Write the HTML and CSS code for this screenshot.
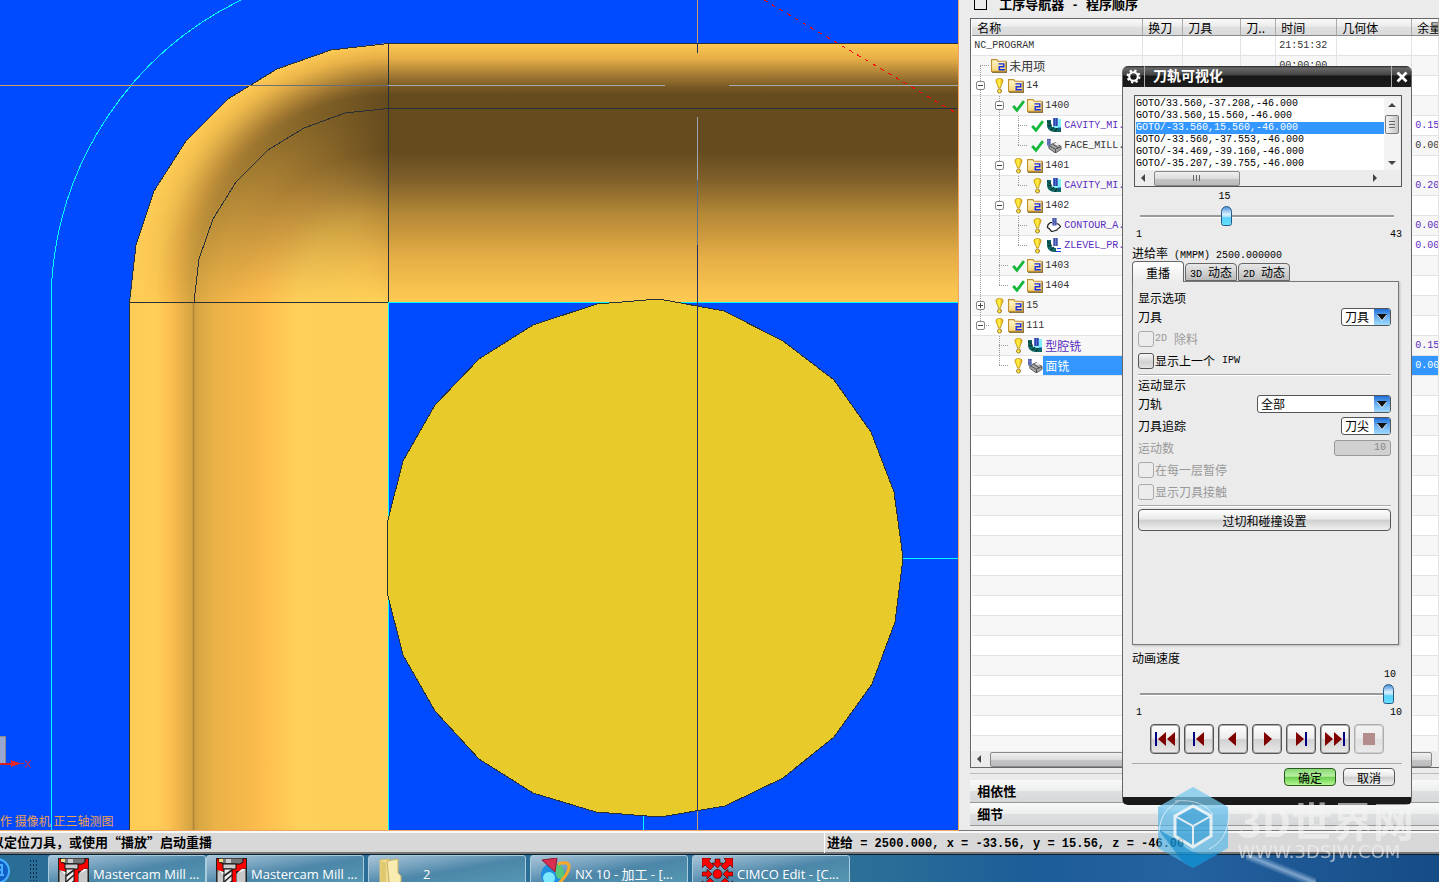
FILE: index.html
```html
<!DOCTYPE html>
<html lang="zh-CN">
<head>
    <meta charset="UTF-8">
    <meta name="viewport" content="width=device-width, initial-scale=1.0">
    <title>刀轨可视化</title>
    <link rel="stylesheet" href="styles.css">
</head>
<body>
    <svg class="sprite" width="0" height="0" aria-hidden="true">
        <defs>
            <linearGradient id="gold" x1="0" x2="1" y1="0" y2="0">
                <stop offset="0" stop-color="#ffd800"/>
                <stop offset=".5" stop-color="#ffee50"/>
                <stop offset="1" stop-color="#e8a800"/>
            </linearGradient>
            <linearGradient id="paper" x1="0" x2="0" y1="0" y2="1">
                <stop offset="0" stop-color="#fff6cc"/>
                <stop offset="1" stop-color="#f8d878"/>
            </linearGradient>
        </defs>
        <symbol id="warn" viewBox="-1 0 12 16">
            <path d="M2.500 2.500C2.500 1 4.500.5 6 .5S9.500 1 9.500 2.500 7.500 7 7 10H5C4.500 7 2.500 5 2.500 2.500z" fill="url(#gold)" stroke="#b88a10" stroke-width=".8"/>
            <circle cx="6" cy="13" r="2" fill="url(#gold)" stroke="#8a6a20" stroke-width=".8"/>
        </symbol>
        <symbol id="check" viewBox="-2 -1 14 14">
            <path d="M1 6 4.500 10 11 1.500" fill="none" stroke="#14b83a" stroke-width="2.600"/>
        </symbol>
        <symbol id="folder" viewBox="0 0 15 14">
            <path d="M.5 12.500V1.500h5l1 1.500h7.500v9.500z" fill="url(#paper)" stroke="#c09030"/>
            <path d="M1 13.500h13.500V3.500" fill="none" stroke="#8a7440"/>
            <path d="M7 5.500h5V8.200H7.700V11H13" fill="none" stroke="#1a2ae0" stroke-width="1.300"/>
        </symbol>
        <symbol id="cavity" viewBox="0 0 16 15">
            <path d="M7 1h8v13H7z" fill="#7ff0f8"/>
            <path d="M1 2h4v4c0 3 3 4 6 4h4v4H9C4 14 1 11 1 7z" fill="#0e6460"/>
            <path d="M1 3l4 3M2 8l4-1M5 12l3-3M9 14l2-4" stroke="#062c2c"/>
            <path d="M7 0h5v8H7z" fill="#4c6cd0"/>
            <path d="M8.500 0v8M10.500 0v8" stroke="#222c88" stroke-width=".6"/>
            <path d="M12 10h3" stroke="#1840e0"/>
        </symbol>
        <symbol id="zlevel" viewBox="0 0 16 15">
            <path d="M1 2h4v4c0 3 3 4 5 4v4H8C4 14 1 11 1 7z" fill="#0e6460"/>
            <path d="M1 3l4 3M2 8l4-1M5 12l3-3" stroke="#062c2c"/>
            <path d="M7 0h5v8H7z" fill="#6c80c8"/>
            <path d="M8.500 0v8M10.500 0v8" stroke="#2c3488" stroke-width=".6"/>
            <path d="M11 10.500h4M10 13.500h5" stroke="#1840e0"/>
        </symbol>
        <symbol id="face" viewBox="0 0 17 16">
            <path d="M3 8l7-3 6 4v3l-6 4-7-5z" fill="#a8a8a8" stroke="#555"/>
            <path d="M3 8l7 4 6-3M10 12v4M7 6.500l6 4" fill="none" stroke="#444"/>
            <path d="M8 6l3-1 3 2-2 1z" fill="#eee"/>
            <path d="M1 1h4v7H1z" fill="#7a88c8"/>
            <path d="M2 1v7M4 1v7" stroke="#333c90" stroke-dasharray="2 1"/>
        </symbol>
        <symbol id="contour" viewBox="0 0 16 16">
            <path d="M6 5H4C2 6 1 8 1 10c2 1 3 2 4 4 2 1 4-1 6-1 0-2 3-2 4-4-1-2-3-3-5-4" fill="#fff" stroke="#222" stroke-width="1.300"/>
            <path d="M6 0h5v8H6z" fill="#6c80c8"/>
            <path d="M7.500 0v8M9.500 0v8" stroke="#2c3488" stroke-width=".6"/>
        </symbol>
        <symbol id="mill" viewBox="0 0 31 32">
            <path d="M0 0h31v32H0z" fill="#222"/>
            <path d="M1 1h29v12H1z" fill="#f00"/>
            <path d="M3 0h24v4l-3 2H8L3 4z" fill="#777" stroke="#111"/>
            <path d="M10 1h5v4h-5z" fill="#ccc"/>
            <path d="M3 1h4v3H3z" fill="#f0e080"/>
            <path d="M7 6h13v5H7z" fill="#ccc" stroke="#111"/>
            <path d="M1 12l7 4v16H1zM20 16l6-5h4v21H20z" fill="#c8c8c8" stroke="#222"/>
            <path d="M1 12l7 2v3zM20 16l6-5h4z" fill="#fff"/>
            <path d="M16 12h4v20h-4z" fill="#f00"/>
            <path d="M8 11h8v21H8z" fill="#eee" stroke="#111"/>
            <path d="M8 18l8-6M8 24l8-7M8 30l8-7" stroke="#222" stroke-width="1.600"/>
        </symbol>
    </svg>

    <main class="workspace">
        <section class="viewport">
            <div class="corner"></div>
            <svg class="scene" width="100%" height="100%" shape-rendering="crispEdges">
                <defs>
                    <linearGradient id="wallV" x1="0" x2="1" y1="0" y2="0">
                        <stop offset="0" stop-color="#ffcb55"/>
                        <stop offset=".1" stop-color="#ffce57"/>
                        <stop offset=".15" stop-color="#fcc253"/>
                        <stop offset=".175" stop-color="#f5b84c"/>
                        <stop offset=".24" stop-color="#d5a442"/>
                        <stop offset=".246" stop-color="#a88238"/>
                        <stop offset=".25" stop-color="#d0a040"/>
                        <stop offset=".27" stop-color="#d9a743"/>
                        <stop offset=".33" stop-color="#ebb248"/>
                        <stop offset=".45" stop-color="#f5b84b"/>
                        <stop offset=".51" stop-color="#ffbe4e"/>
                        <stop offset=".65" stop-color="#ffd05a"/>
                        <stop offset="1" stop-color="#ffd057"/>
                    </linearGradient>
                    <linearGradient id="wallH" x1="0" x2="0" y1="0" y2="1">
                        <stop offset="0" stop-color="#ffca55"/>
                        <stop offset=".06" stop-color="#e6ae46"/>
                        <stop offset=".12" stop-color="#a97e35"/>
                        <stop offset=".17" stop-color="#785925"/>
                        <stop offset=".2" stop-color="#654b1e"/>
                        <stop offset=".42" stop-color="#654b1e"/>
                        <stop offset=".53" stop-color="#80602a"/>
                        <stop offset=".66" stop-color="#b48836"/>
                        <stop offset=".83" stop-color="#e6ae46"/>
                        <stop offset=".97" stop-color="#fbc650"/>
                        <stop offset="1" stop-color="#fdca54"/>
                    </linearGradient>
                </defs>
                <rect x="130" y="302" width="259" height="100%" fill="url(#wallV)"/>
                <rect x="389" y="43" width="100%" height="259" fill="url(#wallH)"/>
                <g fill="none" stroke="#2a3038">
                    <path d="M129.500 900V302L136 245 154 191 186 141 228 99 277 69 331 50 388 43.500H2000"/>
                    <path d="M194 302 199 259 213 219 236 182 268 150 304 128 345 113 388 108.500H2000"/>
                    <path d="M130 302.500H389M388.500 43V302"/>
                </g>
                <path d="M388.500 900V302.500H2000" fill="none" stroke="#00ffff"/>
                <path d="M51.500 900V285A338 338 0 0 1 241 0" fill="none" stroke="#00ffff"/>
                <path d="M0 85.500H250" stroke="#d0a05c"/>
                <path d="M250 85.500H388" stroke="#6a7078"/>
                <path d="M388 85.500H665M729 85.500H2000" stroke="#a0aab0"/>
                <polygon points="659,299 724,311 783,341 834,380 871,432 894,492 903,558 895,622 872,684 834,737 783,778 725,806 660,817 596,812 533,793 479,759 435,711 403,655 387,592 387,524 403,461 435,405 479,359 533,325 597,304" fill="#e8ca2a" stroke="#2a3038"/>
                <path d="M903 558.500H2000M643.500 816V900" stroke="#00ffff"/>
                <path d="M697.500 0V43M697.500 811V900" stroke="#d0a05c"/>
                <path d="M697.500 43V53M697.500 245V811" stroke="#20306a"/>
                <path d="M697.500 117V180" stroke="#9aa4b4"/>
                <path d="M697.500 180V245" stroke="#5c7088"/>
                <path d="M764 0 956 113" stroke="#f00" stroke-dasharray="4 5"/>
                <rect x="-10" y="736" width="15" height="27" fill="#9aa8d0" stroke="#8a8a8a"/>
                <path d="M0 763.500H12" stroke="#d02020" stroke-width="2"/>
                <path d="M11 760 21 763.500 11 767z" fill="#e02828"/>
                <path d="M20 763.500H24" stroke="#c03040"/>
                <path d="M25 760 31 768M31 760 25 768" stroke="#a03070"/>
            </svg>
            <p class="view-name">作 摄像机 正三轴测图</p>
        </section>

        <aside class="navigator">
            <h2 class="nav-title"><span class="pin"></span><span>工序导航器<span class="dash"> - </span>程序顺序</span></h2>
            <div class="tree-frame">
                <div class="tree-scroll">
                    <table class="tree">
                        <colgroup>
                            <col class="c-name"><col class="c-change"><col class="c-tool"><col class="c-num"><col class="c-time"><col class="c-geom"><col>
                        </colgroup>
                        <thead>
                            <tr><th>名称</th><th>换刀</th><th>刀具</th><th>刀..</th><th>时间</th><th>几何体</th><th>余量</th></tr>
                        </thead>
                        <tbody>
                            <tr><td><div class="node">NC_PROGRAM</div></td><td></td><td></td><td></td><td>21:51:32</td><td></td><td></td></tr>
                            <tr><td><div class="node"><i class="g first"></i><svg class="ico"><use href="#folder"/></svg><span class="zh">未用项</span></div></td><td></td><td></td><td></td><td>00:00:00</td><td></td><td></td></tr>
                            <tr><td><div class="node"><i class="g v"><button class="toggle" aria-label="折叠"></button></i><svg class="mark"><use href="#warn"/></svg><svg class="ico"><use href="#folder"/></svg>14</div></td><td></td><td></td><td></td><td></td><td></td><td></td></tr>
                            <tr><td><div class="node"><i class="g v"></i><i class="g v"><button class="toggle" aria-label="折叠"></button></i><svg class="mark"><use href="#check"/></svg><svg class="ico"><use href="#folder"/></svg>1400</div></td><td></td><td></td><td></td><td></td><td></td><td></td></tr>
                            <tr class="op"><td><div class="node"><i class="g v"></i><i class="g v"></i><i class="g tee"></i><svg class="mark"><use href="#check"/></svg><svg class="ico"><use href="#cavity"/></svg>CAVITY_MI...</div></td><td></td><td></td><td></td><td></td><td></td><td>0.15</td></tr>
                            <tr><td><div class="node"><i class="g v"></i><i class="g v"></i><i class="g last"></i><svg class="mark"><use href="#check"/></svg><svg class="ico"><use href="#face"/></svg>FACE_MILL...</div></td><td></td><td></td><td></td><td></td><td></td><td>0.00</td></tr>
                            <tr><td><div class="node"><i class="g v"></i><i class="g v"><button class="toggle" aria-label="折叠"></button></i><svg class="mark"><use href="#warn"/></svg><svg class="ico"><use href="#folder"/></svg>1401</div></td><td></td><td></td><td></td><td></td><td></td><td></td></tr>
                            <tr class="op"><td><div class="node"><i class="g v"></i><i class="g v"></i><i class="g last"></i><svg class="mark"><use href="#warn"/></svg><svg class="ico"><use href="#cavity"/></svg>CAVITY_MI...</div></td><td></td><td></td><td></td><td></td><td></td><td>0.20</td></tr>
                            <tr><td><div class="node"><i class="g v"></i><i class="g v"><button class="toggle" aria-label="折叠"></button></i><svg class="mark"><use href="#warn"/></svg><svg class="ico"><use href="#folder"/></svg>1402</div></td><td></td><td></td><td></td><td></td><td></td><td></td></tr>
                            <tr class="op"><td><div class="node"><i class="g v"></i><i class="g v"></i><i class="g tee"></i><svg class="mark"><use href="#warn"/></svg><svg class="ico"><use href="#contour"/></svg>CONTOUR_A...</div></td><td></td><td></td><td></td><td></td><td></td><td>0.00</td></tr>
                            <tr class="op"><td><div class="node"><i class="g v"></i><i class="g v"></i><i class="g last"></i><svg class="mark"><use href="#warn"/></svg><svg class="ico"><use href="#zlevel"/></svg>ZLEVEL_PR...</div></td><td></td><td></td><td></td><td></td><td></td><td>0.00</td></tr>
                            <tr><td><div class="node"><i class="g v"></i><i class="g tee"></i><svg class="mark"><use href="#check"/></svg><svg class="ico"><use href="#folder"/></svg>1403</div></td><td></td><td></td><td></td><td></td><td></td><td></td></tr>
                            <tr><td><div class="node"><i class="g v"></i><i class="g last"></i><svg class="mark"><use href="#check"/></svg><svg class="ico"><use href="#folder"/></svg>1404</div></td><td></td><td></td><td></td><td></td><td></td><td></td></tr>
                            <tr><td><div class="node"><i class="g v"><button class="toggle plus" aria-label="展开"></button></i><svg class="mark"><use href="#warn"/></svg><svg class="ico"><use href="#folder"/></svg>15</div></td><td></td><td></td><td></td><td></td><td></td><td></td></tr>
                            <tr><td><div class="node"><i class="g last"><button class="toggle" aria-label="折叠"></button></i><svg class="mark"><use href="#warn"/></svg><svg class="ico"><use href="#folder"/></svg>111</div></td><td></td><td></td><td></td><td></td><td></td><td></td></tr>
                            <tr class="op"><td><div class="node"><i class="g"></i><i class="g tee"></i><svg class="mark"><use href="#warn"/></svg><svg class="ico"><use href="#cavity"/></svg><span class="zh">型腔铣</span></div></td><td></td><td></td><td></td><td></td><td></td><td>0.15</td></tr>
                            <tr class="op selected"><td><div class="node"><i class="g"></i><i class="g last"></i><svg class="mark"><use href="#warn"/></svg><svg class="ico"><use href="#face"/></svg><span class="zh">面铣</span></div></td><td></td><td></td><td></td><td></td><td></td><td>0.00</td></tr>
                            <tr><td></td><td></td><td></td><td></td><td></td><td></td><td></td></tr>
                            <tr><td></td><td></td><td></td><td></td><td></td><td></td><td></td></tr>
                            <tr><td></td><td></td><td></td><td></td><td></td><td></td><td></td></tr>
                            <tr><td></td><td></td><td></td><td></td><td></td><td></td><td></td></tr>
                            <tr><td></td><td></td><td></td><td></td><td></td><td></td><td></td></tr>
                            <tr><td></td><td></td><td></td><td></td><td></td><td></td><td></td></tr>
                            <tr><td></td><td></td><td></td><td></td><td></td><td></td><td></td></tr>
                            <tr><td></td><td></td><td></td><td></td><td></td><td></td><td></td></tr>
                            <tr><td></td><td></td><td></td><td></td><td></td><td></td><td></td></tr>
                            <tr><td></td><td></td><td></td><td></td><td></td><td></td><td></td></tr>
                            <tr><td></td><td></td><td></td><td></td><td></td><td></td><td></td></tr>
                            <tr><td></td><td></td><td></td><td></td><td></td><td></td><td></td></tr>
                            <tr><td></td><td></td><td></td><td></td><td></td><td></td><td></td></tr>
                            <tr><td></td><td></td><td></td><td></td><td></td><td></td><td></td></tr>
                            <tr><td></td><td></td><td></td><td></td><td></td><td></td><td></td></tr>
                            <tr><td></td><td></td><td></td><td></td><td></td><td></td><td></td></tr>
                            <tr><td></td><td></td><td></td><td></td><td></td><td></td><td></td></tr>
                            <tr><td></td><td></td><td></td><td></td><td></td><td></td><td></td></tr>
                            <tr><td></td><td></td><td></td><td></td><td></td><td></td><td></td></tr>
                        </tbody>
                    </table>
                </div>
                <div class="hbar"><span class="arrow left"></span><span class="bar-thumb"></span></div>
            </div>
            <div class="sections">
                <button class="section">相依性</button>
                <button class="section">细节</button>
            </div>
        </aside>

        <section class="dialog" aria-label="刀轨可视化">
            <header class="dialog-head">
                <svg class="gear" viewBox="0 0 14 14">
                    <circle cx="7" cy="7" r="4" fill="none" stroke="#fff" stroke-width="2"/>
                    <circle cx="7" cy="7" r="5.500" fill="none" stroke="#fff" stroke-width="2" stroke-dasharray="2.160 2.160"/>
                </svg>
                <h1>刀轨可视化</h1>
                <button class="close" aria-label="关闭">
                    <svg viewBox="0 0 12 12"><path d="M1.500 1.500l9 9M10.500 1.500l-9 9" stroke="#fff" stroke-width="2.800"/></svg>
                </button>
            </header>
            <div class="dialog-body">
                <div class="path-box">
                    <div class="path-row">
                        <select class="path-list" size="6" aria-label="刀轨">
                            <option>GOTO/33.560,-37.208,-46.000</option>
                            <option>GOTO/33.560,15.560,-46.000</option>
                            <option selected>GOTO/-33.560,15.560,-46.000</option>
                            <option>GOTO/-33.560,-37.553,-46.000</option>
                            <option>GOTO/-34.469,-39.160,-46.000</option>
                            <option>GOTO/-35.207,-39.755,-46.000</option>
                        </select>
                        <div class="vbar"><span class="arrow up"></span><span class="v-thumb"></span><span class="arrow down"></span></div>
                    </div>
                    <div class="hbar"><span class="arrow left"></span><span class="bar-thumb grip"></span><span class="arrow right"></span></div>
                </div>

                <div class="slider">
                    <output class="value-mid">15</output>
                    <input type="range" min="1" max="43" value="15" aria-label="步">
                    <div class="ends"><span>1</span><span>43</span></div>
                </div>
                <p class="feed">进给率<span class="mono"> (MMPM) 2500.000000</span></p>

                <div class="tabs">
                    <button class="tab active">重播</button>
                    <button class="tab"><span class="mono">3D </span>动态</button>
                    <button class="tab"><span class="mono">2D </span>动态</button>
                </div>
                <div class="page">
                    <h3>显示选项</h3>
                    <div class="row"><label for="tool">刀具</label><span class="combo"><select id="tool"><option>刀具</option></select></span></div>
                    <label class="check off"><input type="checkbox" disabled><span class="mono">2D </span>除料</label>
                    <label class="check"><input type="checkbox">显示上一个<span class="mono"> IPW</span></label>
                    <hr>
                    <h3>运动显示</h3>
                    <div class="row"><label for="path">刀轨</label><span class="combo wide"><select id="path"><option>全部</option></select></span></div>
                    <div class="row"><label for="trace">刀具追踪</label><span class="combo"><select id="trace"><option>刀尖</option></select></span></div>
                    <div class="row off"><label for="count">运动数</label><input class="count" id="count" type="text" value="10" disabled></div>
                    <label class="check off"><input type="checkbox" disabled>在每一层暂停</label>
                    <label class="check off"><input type="checkbox" disabled>显示刀具接触</label>
                    <hr>
                    <button class="btn settings">过切和碰撞设置</button>
                </div>

                <div class="slider speed">
                    <label for="speed">动画速度</label>
                    <output class="value-end">10</output>
                    <input id="speed" type="range" min="1" max="10" value="10">
                    <div class="ends"><span>1</span><span>10</span></div>
                </div>
                <div class="player">
                    <button aria-label="到开头"><svg viewBox="0 0 22 16"><path d="M1 1h2v14H1z" fill="#000080"/><path d="M12 1v14L4 8zM21 1v14L13 8z" fill="#800000"/></svg></button>
                    <button aria-label="单步向后"><svg viewBox="0 0 22 16"><path d="M5 1h2v14H5z" fill="#000080"/><path d="M16 1v14L8 8z" fill="#800000"/></svg></button>
                    <button aria-label="反向播放"><svg viewBox="0 0 22 16"><path d="M14 1v14L6 8z" fill="#800000"/></svg></button>
                    <button aria-label="播放"><svg viewBox="0 0 22 16"><path d="M8 1v14l8-7z" fill="#800000"/></svg></button>
                    <button aria-label="单步向前"><svg viewBox="0 0 22 16"><path d="M15 1h2v14h-2z" fill="#000080"/><path d="M6 1v14l8-7z" fill="#800000"/></svg></button>
                    <button aria-label="到结尾"><svg viewBox="0 0 22 16"><path d="M19 1h2v14h-2z" fill="#000080"/><path d="M1 1v14l8-7zM10 1v14l8-7z" fill="#800000"/></svg></button>
                    <button aria-label="停止" disabled><svg viewBox="0 0 22 16"><path d="M5 2h12v12H5z" fill="#600000"/></svg></button>
                </div>
                <div class="actions">
                    <button class="btn ok">确定</button>
                    <button class="btn">取消</button>
                </div>
            </div>
        </section>
    </main>

    <footer class="statusbar">
        <p class="hint"><span>以定位刀具，或使用“播放”启动重播</span></p>
        <p class="coords">进给<span> = 2500.000, x = -33.56, y = 15.56, z = -46.00</span></p>
    </footer>

    <nav class="taskbar">
        <div class="start">
            <svg class="orb" viewBox="0 0 20 30"><circle cx="-3" cy="16" r="12" fill="#1060c8" stroke="#48b0ff" stroke-width="2"/><path d="M-2 10H2V20M-4 15H2M-5 20H4" fill="none" stroke="#48b0ff" stroke-width="2"/></svg>
            <span class="dots"></span>
        </div>
        <button class="task"><svg class="task-ico" viewBox="0 0 31 32"><use href="#mill"/></svg>Mastercam Mill ...</button>
        <button class="task"><svg class="task-ico" viewBox="0 0 31 32"><use href="#mill"/></svg>Mastercam Mill ...</button>
        <button class="task folder"><svg class="task-ico" viewBox="0 0 31 32"><path d="M2 2l9-1v31H2z" fill="#f0dc90" stroke="#d8c070"/><path d="M9 3l11-2v14l3 3v14H12z" fill="#f8ecb0" stroke="#c8b060"/><path d="M3 3l5 2v27H3z" fill="#e0c870"/></svg>2</button>
        <button class="task"><svg class="task-ico" viewBox="0 0 31 32"><circle cx="13" cy="17" r="12" fill="#2090e0"/><path d="M15 6c6-1 10 5 9 11s-8 4-8 0-5-7-1-11z" fill="#58c878"/><circle cx="9" cy="20" r="6" fill="#7ce8ff"/><path d="M18 6c10-3 13 0 10 7S17 29 10 31" fill="none" stroke="#f8a828" stroke-width="3"/><path d="M2 2l15-2-2 14z" fill="#d83050" stroke="#901830"/></svg>NX 10 - 加工 - [...</button>
        <button class="task"><svg class="task-ico" viewBox="0 0 31 32"><g fill="#f00" stroke="#200" stroke-width=".6"><path d="M0 0h9L7 3l5 5-4 4-5-5-3 3z"/><path d="M31 0h-9l2 3-5 5 4 4 5-5 3 3z"/><path d="M0 32v-9l3 2 5-5 4 4-5 5 2 3zM31 32v-9l-3 2-5-5-4 4 5 5-2 3z"/><path d="M13 1h5v4h3l-5.500 5L10 5h3zM0 14h5v-3l5 5-5 5v-3H0zM31 14h-5v-3l-5 5 5 5v-3h5z"/><circle cx="15.500" cy="16" r="4.500"/></g></svg>CIMCO Edit - [C...</button>
    </nav>

    <div class="watermark">
        <svg class="wm-logo" viewBox="0 0 72 82">
            <path d="M36 0L71 20V61L36 81 1 61V20z" fill="#46b4ea" opacity=".72"/>
            <path d="M36 0L71 20 18 24 1 20z" fill="#9cd8f4" opacity=".5"/>
            <path d="M1 42L25 74 36 81 64 65C46 70 32 66 24 56z" fill="#0a8cd0" opacity=".8"/>
            <path d="M18 29L36 19l18 10v20L36 60 18 49z" fill="#3ca4da" stroke="#e6f2f8" stroke-width="3"/>
            <path d="M18 29l18 10 18-10M36 39v21" fill="none" stroke="#e6f2f8" stroke-width="2"/>
            <path d="M18 14C38 12 50 18 56 28M71 20C74 44 64 56 52 62M2 44C4 28 10 20 22 14" fill="none" stroke="#d4ecf8"/>
        </svg>
        <div class="wm-text"><strong>3D世界网</strong><span>WWW.3DSJW.COM</span></div>
    </div>
</body>
</html>
```

FILE: styles.css
```css
* {
    box-sizing: border-box;
}
body {
    display: flex;
    flex-direction: column;
    height: 100vh;
    margin: 0;
    overflow: hidden;
    background: #ebebeb;
    color: #000;
    font: 12px/16px "Noto Sans CJK SC", sans-serif;
}
h1, h2, h3, p {
    margin: 0;
}
button, select, input {
    margin: 0;
    padding: 0;
    font: inherit;
    color: inherit;
}
.sprite {
    position: absolute;
}
.mono {
    font-family: "Liberation Mono", monospace;
    font-size: 10px;
    white-space: pre;
}

/* layout */
.workspace {
    position: relative;
    display: grid;
    grid-template-columns: 2fr 1fr;
    grid-template-rows: minmax(0, 1fr);
    flex: 1;
    min-height: 0;
}

/* graphics view */
.viewport {
    position: relative;
    overflow: hidden;
    background: #004aff;
    border-right: 1px solid #f0a860;
    border-bottom: 1px solid #f0a860;
}
.scene {
    position: absolute;
    inset: 0;
}
.corner {
    position: absolute;
    left: 130px;
    top: 43px;
    width: 259px;
    height: 259px;
    clip-path: polygon(0 259px, 6px 202px, 24px 148px, 56px 98px, 98px 56px, 147px 26px, 201px 7px, 259px 0, 259px 259px);
    background: radial-gradient(circle at 100% 100%, #ffd258 0, #ffd05a 91px, #ffbe4e 127px, #ebb248 174px, #d9a743 195px, #d5a442 198px, #f5b84a 217px, #fecb54 234px, #ffce57 259px);
}
.corner::before {
    content: "";
    position: absolute;
    inset: 0;
    background: radial-gradient(circle at 100% 100%, #fdca54 0, #e6ae46 44px, #b48836 88px, #80602a 122px, #654b1e 150px, #654b1e 207px, #785925 215px, #a97e35 228px, #e6ae46 244px, #ffca55 259px);
    -webkit-mask-image: conic-gradient(from 270deg at 100% 100%, transparent 0deg, #000 90deg);
    mask-image: conic-gradient(from 270deg at 100% 100%, transparent 0deg, #000 90deg);
}
.view-name {
    position: absolute;
    left: 0;
    bottom: 1px;
    white-space: nowrap;
    color: #f0a050;
}

/* operation navigator */
.navigator {
    display: flex;
    flex-direction: column;
    min-width: 0;
    padding-left: 11px;
    background: #ebebeb;
    border-bottom: 1px solid #777;
}
.nav-title {
    display: flex;
    gap: 12px;
    height: 18px;
    padding-left: 4px;
    font-size: 13px;
    font-weight: bold;
    line-height: 8px;
}
.dash {
    font-family: "Liberation Mono", monospace;
    font-size: 12px;
    white-space: pre;
}
.pin {
    width: 13px;
    height: 10px;
    border: 1px solid #000;
    border-top: 0;
}
.tree-frame {
    display: flex;
    flex-direction: column;
    flex: 1;
    min-height: 0;
    border: 1px solid #666;
    border-right: 0;
    background: #fff;
}
.tree-scroll {
    flex: 1;
    min-height: 0;
    overflow: hidden;
    padding-left: 1px;
}
.tree {
    width: 100%;
    table-layout: fixed;
    border-collapse: separate;
    border-spacing: 0;
    color: #333;
}
.c-name { width: 171px; }
.c-change { width: 40px; }
.c-tool { width: 58px; }
.c-num { width: 35px; }
.c-time { width: 61px; }
.c-geom { width: 75px; }
.tree th {
    height: 17px;
    padding: 1px 0 0 5px;
    overflow: hidden;
    white-space: nowrap;
    text-align: left;
    font-weight: normal;
    line-height: 15px;
    color: #000;
    background: linear-gradient(#fafafa, #ececec 45%, #dfe0e1 50%, #d8d9da);
    border-right: 1px solid #aaa;
    border-bottom: 1px solid #888;
}
.tree td {
    height: 20px;
    padding: 1px 0 0 3px;
    overflow: hidden;
    white-space: nowrap;
    border-right: 1px solid #e3e3e3;
    border-bottom: 1px solid #e3e3e3;
    font: 10px/18px "Liberation Mono", monospace;
}
.tree td:first-child {
    padding: 0;
}
.tree tr:nth-child(even) td {
    background-color: #f7f7f7;
}
.node {
    display: flex;
    align-items: center;
    height: 19px;
    overflow: hidden;
    line-height: 20px;
}
.node:not(:has(i)) {
    padding: 1px 0 0 2px;
}
.zh {
    font: 12px/19px "Noto Sans CJK SC", sans-serif;
}
.op {
    color: #5a2cc0;
}
.tree .selected td:not(:first-child) {
    background: #3397ff;
    color: #fff;
}
.selected .zh {
    flex: 1;
    margin-left: -2px;
    padding-left: 2px;
    background: #3397ff;
    color: #fff;
}
.mark {
    flex: none;
    width: 15px;
    height: 16px;
    margin-right: 2px;
}
.ico {
    flex: none;
    width: 16px;
    height: 15px;
    margin-right: 2px;
}
.g {
    --line: repeating-linear-gradient(#999 0 1px, transparent 1px 2px);
    --dash: repeating-linear-gradient(to right, #999 0 1px, transparent 1px 2px);
    display: flex;
    align-items: center;
    flex: none;
    width: 19px;
    height: 20px;
    padding-left: 4px;
    background-repeat: no-repeat;
}
.v {
    background-image: var(--line);
    background-size: 1px 100%;
    background-position: 8px 0;
}
.tee, .last, .first {
    background-image: var(--line), var(--dash);
    background-size: 1px 100%, 9px 1px;
    background-position: 8px 0, 8px 9px;
}
.last {
    background-size: 1px 10px, 9px 1px;
}
.first {
    background-size: 1px 10px, 9px 1px;
    background-position: 8px 10px, 8px 9px;
}
.toggle {
    width: 9px;
    height: 9px;
    border: 1px solid #888;
    border-radius: 2px;
    background: linear-gradient(#444, #444) center / 5px 1px no-repeat #fff;
}
.toggle.plus {
    background: linear-gradient(#444, #444) center / 5px 1px no-repeat, linear-gradient(#444, #444) center / 1px 5px no-repeat #fff;
}
.hbar {
    display: flex;
    align-items: center;
    height: 16px;
    padding-right: 7px;
    background: #ececec;
}
.arrow {
    flex: none;
    border: 4px solid transparent;
}
.arrow.left {
    margin: 0 9px 0 2px;
    border-right-color: #444;
}
.arrow.right {
    margin-left: auto;
    border-left-color: #444;
}
.arrow.up {
    border-bottom-color: #444;
}
.arrow.down {
    margin-top: auto;
    border-top-color: #444;
}
.bar-thumb {
    flex: 1;
    height: 15px;
    border: 1px solid #888;
    border-radius: 2px;
    background: linear-gradient(#f0f0f0, #dcdcdc 50%, #c4c4c6 55%, #bcbcbe);
}
.sections {
    margin-top: 5px;
    padding: 6px 0 4px;
    border-top: 1px solid #bbb;
}
.section {
    display: block;
    width: 100%;
    height: 23px;
    padding: 0 0 1px 7px;
    border: 0;
    border-bottom: 1px solid #999;
    text-align: left;
    font-weight: bold;
    font-size: 13px;
    background: linear-gradient(#f8f9f9, #eceded 50%, #dedfe0 52%, #d6d7d8);
}

/* dialog window */
.dialog {
    position: absolute;
    top: 66px;
    right: 27px;
    width: 290px;
    border: 1px solid #666;
    border-top: 0;
    border-bottom: 8px solid #1a1a1a;
    border-radius: 6px;
    background: #ebebeb;
}
.dialog-head {
    display: flex;
    align-items: center;
    height: 21px;
    padding-left: 3px;
    border-radius: 5px 5px 0 0;
    color: #fff;
    background: linear-gradient(#222 0, #686868 2px, #444 9px, #161616 10px, #1c1c1c);
}
.gear {
    width: 15px;
    height: 15px;
}
.dialog-head h1 {
    flex: 1;
    height: 21px;
    margin-left: 3px;
    padding-left: 8px;
    border-left: 1px solid #aaa;
    font-size: 14px;
    font-weight: bold;
    line-height: 19px;
}
.close {
    display: flex;
    align-items: center;
    justify-content: center;
    width: 20px;
    height: 21px;
    border: 0;
    border-left: 1px solid #aaa;
    background: none;
}
.close svg {
    width: 12px;
    height: 12px;
}
.dialog-body {
    padding: 8px 9px 11px;
}
.path-box {
    margin-left: 2px;
    border: 1px solid #555;
    background: #ececec;
}
.path-row {
    display: flex;
    height: 74px;
    padding: 2px 1px 0;
}
.path-list {
    flex: 1;
    height: 72px;
    border: 0;
    outline: 0;
    border-radius: 0;
    overflow: hidden;
    background: #fff;
    font: 10px/12px "Liberation Mono", monospace;
}
.path-list option {
    height: 12px;
    min-height: 12px;
    padding: 0;
    line-height: 12px;
    color: #000;
}
.path-list option:checked {
    background: linear-gradient(#3397ff, #3397ff);
    color: #fff;
}
.vbar {
    display: flex;
    flex-direction: column;
    align-items: center;
    width: 16px;
    padding: 1px 0;
    background: #f3f3f3;
}
.v-thumb {
    width: 14px;
    height: 19px;
    margin-top: 8px;
    border: 1px solid #777;
    border-radius: 2px;
    background: repeating-linear-gradient(#666 0 1px, transparent 1px 3px) center / 6px 8px no-repeat, linear-gradient(to right, #f4f4f4, #c4c4c4);
}
.path-box .bar-thumb {
    flex: none;
    width: 35%;
}
.path-box .hbar {
    padding-right: 20px;
}
.grip {
    background: repeating-linear-gradient(to right, #666 0 1px, transparent 1px 3px) center / 8px 6px no-repeat, linear-gradient(#f0f0f0, #dcdcdc 50%, #c4c4c6 55%, #bcbcbe);
}
.slider {
    display: flex;
    flex-direction: column;
    padding-top: 2px;
}
.slider output, .ends {
    font-family: "Liberation Mono", monospace;
    font-size: 10px;
}
.value-mid {
    margin-left: 32%;
}
.value-end {
    align-self: flex-end;
    margin-right: 6px;
}
.slider input {
    appearance: none;
    height: 22px;
    margin: 0 8px;
    background: linear-gradient(#999 0 2px, #fff 2px 3px) 0 10px / 100% 3px no-repeat;
}
.slider input::-webkit-slider-thumb {
    appearance: none;
    width: 11px;
    height: 20px;
    border: 1px solid #245a88;
    border-radius: 6px 6px 3px 3px;
    background: linear-gradient(#4a90d8, #d8f0ff 40%, #b0e4fc 52%, #58d0f8 60%, #66e0ff);
}
.ends {
    display: flex;
    justify-content: space-between;
    padding: 0 0 0 4px;
}
.feed {
    height: 16px;
    margin-top: 2px;
}
.tabs {
    display: flex;
    align-items: flex-end;
    gap: 1px;
    height: 21px;
}
.tab {
    width: 52px;
    height: 18px;
    margin-bottom: 1px;
    border: 1px solid #666;
    border-radius: 4px 4px 0 0;
    background: linear-gradient(#e8e8e8, #bcbcbc);
    line-height: 15px;
    white-space: nowrap;
}
.tab.active {
    position: relative;
    z-index: 1;
    height: 21px;
    margin-bottom: 0;
    border-bottom: 0;
    background: linear-gradient(#fff, #ebebeb);
}
.page {
    height: 364px;
    margin: -1px 3px 0 0;
    padding: 7px 7px 0 5px;
    border: 1px solid #777;
    box-shadow: 1px 1px 2px #bbb;
}
.page h3 {
    font-size: 12px;
    font-weight: normal;
    line-height: 17px;
}
.row, .check {
    display: flex;
    align-items: center;
    height: 22px;
}
.row {
    justify-content: space-between;
}
.check {
    gap: 1px;
}
.off {
    color: #999;
}
.check input {
    appearance: none;
    width: 16px;
    height: 16px;
    border: 1px solid #555;
    border-radius: 3px;
    background: linear-gradient(#f8f8f8, #d0d0d0 60%, #e4e4e4);
}
.check input:disabled {
    border-color: #aaa;
    background: #ececec;
}
.page hr {
    height: 2px;
    margin: 2px 0 0;
    border: 0;
    border-top: 1px solid #aaa;
    background: #fff;
}
.combo {
    position: relative;
    width: 50px;
}
.combo.wide {
    width: 134px;
}
.combo select {
    appearance: none;
    display: block;
    width: 100%;
    height: 18px;
    padding-left: 3px;
    border: 1px solid #555;
    border-radius: 3px;
    background: #fff;
    line-height: 16px;
}
.combo::before {
    content: "";
    position: absolute;
    top: 1px;
    right: 1px;
    width: 16px;
    height: 16px;
    border-radius: 0 2px 2px 0;
    background: linear-gradient(#1f6fd8, #6cb0f0 50%, #a0dcff);
    pointer-events: none;
}
.combo::after {
    content: "";
    position: absolute;
    top: 6px;
    right: 4px;
    border: 5px solid transparent;
    border-top: 6px solid #111;
    border-bottom: 0;
    filter: drop-shadow(0 1px 0 #fff);
    pointer-events: none;
}
.count {
    width: 57px;
    height: 16px;
    padding-right: 4px;
    border: 1px solid #999;
    border-radius: 3px;
    background: #d0d0d0;
    text-align: right;
    font-family: "Liberation Mono", monospace;
    font-size: 10px;
    color: #888;
}
.btn {
    width: 52px;
    height: 18px;
    border: 1px solid #555;
    border-radius: 4px;
    background: linear-gradient(#fff, #e8e8e8 45%, #cfcfcf 52%, #f0f0f0);
    line-height: 15px;
}
.settings {
    width: 100%;
    height: 22px;
    margin-top: 2px;
}
.ok {
    border-color: #2a5a20;
    background: linear-gradient(#8ad878, #b8f0a0 45%, #6cd050 52%, #b4f890);
}
.speed {
    padding-top: 5px;
}
.speed .value-end {
    margin-top: 1px;
}
.player {
    display: flex;
    gap: 4px;
    margin: 3px 0 9px 18px;
}
.player button {
    display: flex;
    align-items: center;
    justify-content: center;
    width: 30px;
    height: 30px;
    border: 1px solid #555;
    border-radius: 4px;
    background: linear-gradient(#fff, #ececec 48%, #d2d2d2 52%, #e8e8e8);
    box-shadow: inset 0 0 0 1px #aaa;
}
.player button:disabled {
    opacity: .4;
}
.player svg {
    width: 22px;
    height: 16px;
}
.actions {
    display: flex;
    justify-content: flex-end;
    gap: 7px;
    padding: 4px 7px 0 0;
    border-top: 1px solid #aaa;
}

/* status line */
.statusbar {
    display: grid;
    grid-template-columns: 824px 1fr;
    height: 23px;
    border-top: 2px solid #f8f8f8;
    border-bottom: 2px solid #777;
    background: #d8d8d8;
    font-size: 13px;
    font-weight: bold;
    line-height: 18px;
    white-space: pre;
}
.hint {
    display: flex;
    justify-content: flex-end;
    width: 212px;
    overflow: hidden;
}
.coords {
    padding-left: 2px;
    border-left: 1px solid #fff;
}
.coords span {
    font-family: "Liberation Mono", monospace;
    font-size: 12px;
}

/* taskbar */
.taskbar {
    display: flex;
    height: 28px;
    overflow: hidden;
    border-top: 1px solid #0a2030;
    background: linear-gradient(to top right, transparent 40%, rgba(190, 215, 240, .6) 50%, transparent 60%) 91% 0 / 70px 28px no-repeat, linear-gradient(to right, #2a6e98, #2c7098 60%, #1c5c98 72%, #2462a0 82%, #164c86);
}
.start {
    display: flex;
    width: 48px;
}
.orb {
    width: 20px;
    height: 30px;
}
.dots {
    width: 9px;
    height: 22px;
    margin: 4px 0 0 9px;
    background: radial-gradient(#0a2c44 1px, transparent 1px) 0 0 / 3px 4px;
}
.task {
    display: flex;
    align-items: center;
    gap: 4px;
    width: 158px;
    height: 40px;
    margin-right: 4px;
    padding: 0 0 3px 9px;
    border: 1px solid #a8ccdc;
    border-radius: 3px;
    background: linear-gradient(170deg, #a8c4d8 0, #78a4c0 25%, #4c86a8 45%, #58a0b8);
    color: #fff;
    font: 13px/18px "Open Sans", "Noto Sans CJK SC", sans-serif;
    white-space: nowrap;
}
.task:nth-child(2) {
    margin-right: 0;
}
.task.folder {
    gap: 14px;
}
.task-ico {
    flex: none;
    width: 31px;
    height: 32px;
}

/* site mark over the lower right corner */
.watermark {
    position: fixed;
    right: 25px;
    bottom: 13px;
    display: flex;
    align-items: center;
    gap: 9px;
    pointer-events: none;
}
.wm-logo {
    width: 72px;
    height: 82px;
    opacity: .85;
}
.wm-text {
    display: flex;
    flex-direction: column;
    color: rgba(245, 245, 245, .6);
    white-space: nowrap;
}
.wm-text strong {
    font-size: 41px;
    line-height: 48px;
}
.wm-text span {
    font: 18px/18px "DejaVu Sans", sans-serif;
}
```
